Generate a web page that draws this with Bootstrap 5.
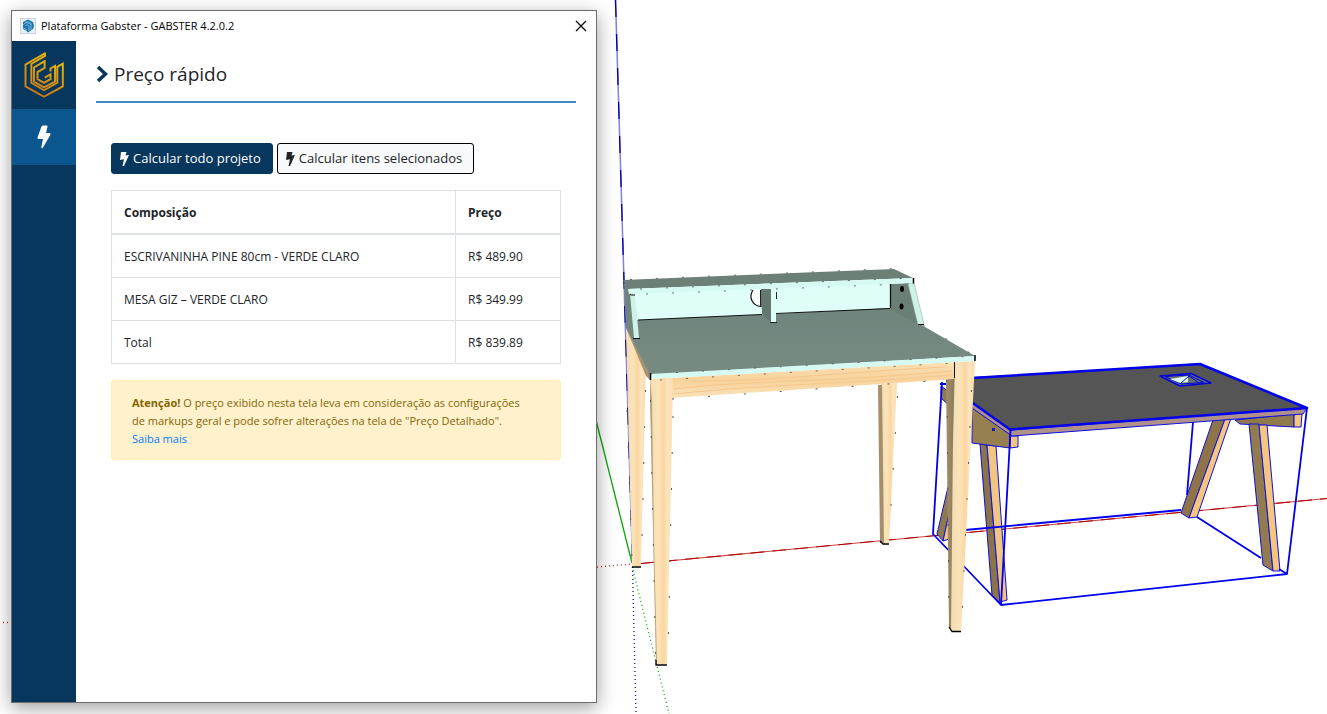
<!DOCTYPE html>
<html lang="pt-BR">
<head>
<meta charset="utf-8">
<meta name="viewport" content="width=device-width, initial-scale=1">
<title>Plataforma Gabster</title>
<link href="https://cdn.jsdelivr.net/npm/bootstrap@5.3.0/dist/css/bootstrap.min.css" rel="stylesheet">
<style>
  :root { --navy: #08375d; --navy-active: #0c568f; --rule: #3f8acb; }
  body { font-family: "Open Sans", "Noto Sans", sans-serif; font-size: 12px; line-height: 18px; color: #212529; }
  .workspace { padding: 10px 11px 11px; }
  .scene { inset: 0; width: 100%; height: 100%; }
  .plugin-window { width: 100%; max-width: 586px; border: 1px solid #6d6d6d; box-shadow: 0 5px 18px rgba(0,0,0,.38); }
  .title-bar { height: 30px; padding: 0 8px; gap: 5px; font-size: 11px; color: #000; }
  .close-btn { width: 14px; height: 14px; line-height: 0; }
  .side-nav { width: 64px; background: var(--navy); }
  .brand-link { height: 68px; }
  .side-link { height: 56px; background: var(--navy-active); }
  .page-body { padding: 20px; }
  .page-heading { font-size: 19px; line-height: 26px; font-weight: 500; padding-bottom: 14px; border-bottom: 2px solid var(--rule); gap: 6px; }
  .price-panel { padding: 40px 15px 0; }
  .btn-calc { font-size: 13px; line-height: 21px; padding: 4px 11px 4px 8px; border-radius: 3px; display: inline-flex; align-items: center; gap: 4px; white-space: nowrap; }
  .btn-all, .btn-all:hover { background: var(--navy); border-color: var(--navy); color: #fff; }
  .btn-picked, .btn-picked:hover { background: #f8f9fa; border-color: #000; color: #212529; }
  .price-table { margin: 16px 0; border-color: #dee2e6; color: #212529; }
  .price-table th, .price-table td { padding: 13px 12px 11px; }
  .price-table thead th { border-bottom-width: 2px; }
  .price-col { width: 105px; }
  .notice { background: #fff1cc; border-color: #ffeeba; color: #856404; font-size: 11px; padding: 13px 30px 11px 20px; border-radius: 3px; }
  .notice a { color: #007bff; }
</style>
</head>
<body>
<main class="workspace position-relative min-vh-100 d-flex overflow-hidden bg-white">
  <svg class="scene position-absolute" viewBox="0 0 1327 714" preserveAspectRatio="xMinYMin slice" aria-hidden="true">
    <defs>
      <linearGradient id="pine" x1="0" x2="1" y1="0" y2="0">
        <stop offset="0" stop-color="#f3dcb0"/><stop offset=".35" stop-color="#fbe3ba"/><stop offset=".6" stop-color="#fbd6a0"/><stop offset=".75" stop-color="#fbe5bf"/><stop offset="1" stop-color="#fbdcae"/>
      </linearGradient>
      <linearGradient id="pineRail" x1="0" x2="0" y1="0" y2="1">
        <stop offset="0" stop-color="#fae0b4"/><stop offset=".5" stop-color="#f8d29c"/><stop offset="1" stop-color="#fbe2b8"/>
      </linearGradient>
      <linearGradient id="shade" x1="0" x2="1" y1="0" y2="0">
        <stop offset="0" stop-color="#a48f68"/><stop offset="1" stop-color="#85765a"/>
      </linearGradient>
      <linearGradient id="greenTop" x1="0" x2="0" y1="0" y2="1">
        <stop offset="0" stop-color="#6d827a"/><stop offset="1" stop-color="#778b83"/>
      </linearGradient>
    </defs>

    <!-- drawing axes -->
    <g fill="none">
      <path d="M615.500 0L632.500 563" stroke="#8080e0" stroke-width="1.500"/>
      <path d="M615.500 0L632.500 563" stroke="#0000a0" stroke-width="1.300" stroke-dasharray="17 17"/>
      <path d="M596 420L632 563" stroke="#0aa60a" stroke-width="1.300"/>
      <path d="M641 563.500L1327 498.500" stroke="#c44" stroke-width="1.100"/>
      <path d="M641 563.500L1327 498.500" stroke="#b00000" stroke-width="1" stroke-dasharray="14 8"/>
      <path d="M3 622.500H11M597 567L632 564" stroke="#c22" stroke-width="1.300" stroke-dasharray="1 3"/>
      <path d="M632.500 567L636 714" stroke="#22b" stroke-width="1.400" stroke-dasharray="1 3"/>
      <path d="M633 570L669 714" stroke="#0a0" stroke-width="1.300" stroke-dasharray="1 3"/>
    </g>

    <!-- selected desk -->
    <g stroke-linejoin="round">
      <g stroke="#0f0fe0" stroke-width="1">
        <path fill="#8f7a4e" d="M937 534L952 470V500L943 541Z"/>
        <path fill="#f0c680" d="M943 541L952 500V538Z"/>
        <path fill="#8f7a4e" d="M941 386L952 394V408L941 398Z"/>
        <path fill="#8f7448" d="M1213 420L1225 419L1189 518L1181 513Z"/>
        <path fill="#f4c67e" d="M1225 419L1231 418L1197 517L1189 518Z"/>
        <path fill="#90794a" d="M1235 420L1294 414V427L1240 424Z"/>
        <path fill="#f4c67e" d="M1294 415L1302 413L1301 427H1294Z"/>
        <path fill="#927b4e" d="M1249 424H1259L1273 571L1263 565Z"/>
        <path fill="#f4c67e" d="M1259 425H1267L1280 571H1273Z"/>
        <path fill="#8b7448" d="M980 444L987 445L1000 603L992 595Z"/>
        <path fill="#f0c680" d="M987 445L996 446L1007 600L1000 602Z"/>
        <path fill="#96804f" d="M972 407L1010 434V448L972 443Z"/>
        <path fill="#f0c680" d="M1010 436H1018V447L1010 448Z"/>
        <path fill="#b0918a" d="M1010 430L1307 408L1303 414L1012 436L972 408V402Z"/>
      </g>
      <path fill="#555" d="M972 377L1200 364L1307 408L1010 429L972 403Z"/>
      <g fill="none" stroke="#00e">
        <path stroke-width="2.500" d="M972 378L1200 364L1307 408L1010 429.500L972 402.500"/>
        <path stroke-width="1.800" d="M942 382L933 534L1001 605L1287 574L1307 408M1010.500 430L1001 605M965 530L1181 510M1197 517L1261 558M1279 569L1287 574M1193 422L1187 495M940 384L950 384"/>
      </g>
      <path fill="#68716f" stroke="#0000dc" stroke-width="1.400" d="M1160 376L1191 373.500L1211 383L1180 386Z"/>
      <path fill="none" stroke="#0000dc" d="M1165 376.500L1189 375L1204 382.500L1181 384Z"/>
      <path fill="#dffcfa" d="M1170 379L1188 376V382L1180 383Z"/>
      <path fill="none" stroke="#0000dc" d="M1181 383L1189 376L1199 383"/>
      <rect x="992" y="428" width="3" height="3" fill="#1818c8"/>
    </g>

    <!-- pine desk: legs and rails -->
    <path fill="url(#pine)" d="M626 328L646 360L645 400L641 566H632Z"/>
    <path fill="#a89270" d="M626 328L650 374V380L646 376Z"/>
    <path fill="url(#pine)" d="M881 384L897 383L889 543H882Z"/>
    <path fill="#a58f6b" d="M878 385H882L884 543H880Z"/>
    <path fill="url(#shade)" d="M946 380L956 362L954 440L952 630L949 627Z"/>
    <path fill="url(#pine)" d="M955 362L975 361L971 440L961 631H951L953 440Z"/>
    <path fill="url(#pineRail)" d="M650 379L954 362V379L672 398Z"/>
    <path fill="none" stroke="#f5c78c" d="M674 389C750 380 820 383 952 371M674 394C770 384 850 384 952 375M690 381C760 382 830 373 945 367"/>
    <path fill="none" stroke="#111" d="M954.500 362V378"/>
    <path fill="url(#pine)" d="M650 379L673 378L672 430L667 664H656L651 430Z"/>
    <path fill="#b9a27b" d="M650 378L652 400L654 540L657 664H656L650 400Z"/>
    <g fill="none" stroke="#000" stroke-width="1.300">
      <path d="M656 660V665H667M632 567H641M949 627L952 631.500H961M880 541L883 544H889"/>
      <path stroke="#555" stroke-width="1" stroke-dasharray="2 34" d="M645.500 390L641.500 562M650.500 400L655.500 655M673 416L668 655M897.500 396L889 540M971.500 390L962 620M947 380L949 620M627 410L632 560M672 399L945 380"/>
    </g>

    <!-- pine desk: painted top, hutch and shelf -->
    <path fill="url(#greenTop)" d="M624 283L632 290L638 320L890 307L920 324L975 356L650 375L626 328Z"/>
    <path fill="#dffef8" d="M634 293L891 282V308L776 314L637 320Z"/>
    <path fill="none" stroke="#111" stroke-width="1.200" d="M638 320L762 314.500M776 313.500L890 308.500"/>
    <path fill="#fff" stroke="#111" stroke-width="1.200" d="M753 290C748 298 753 306 761 306.500V290"/>
    <path fill="#64786f" d="M761 289H771V322L762 314Z"/>
    <path fill="#dffef8" d="M771 288H776V322H771Z"/>
    <path fill="none" stroke="#222" d="M760.500 290V306M770 322.500H777M776.500 292V299"/>
    <path fill="#6b7f77" d="M890 284L909 283L919 325L890 309Z"/>
    <path fill="none" stroke="#111" stroke-width="1.300" d="M890.500 284V308"/>
    <ellipse cx="902" cy="289" rx="2" ry="3"/><ellipse cx="901.500" cy="306.500" rx="2" ry="3"/>
    <path fill="#cef1e8" stroke="#8ba49c" stroke-width=".5" d="M908 284L914 283L924 324L918 325Z"/>
    <path fill="#cef1e8" d="M630 294L635 294L639 338H634Z"/>
    <path fill="none" stroke="#111" d="M633 338.500H640M918 324.500H924M630.500 290V295H635"/>
    <path fill="#6d8078" d="M623 280L894 269L913 278L628 289Z"/>
    <path fill="#d6faf2" d="M628 289L913 278V283L629 294Z"/>
    <path fill="#d6faf2" d="M650 374L975 356V361L650 379Z"/>
    <path fill="none" stroke="#000" stroke-width="1.500" d="M913.500 278V283.500M975 355V361M650.500 373V380"/>
    <path fill="none" stroke="#3b4542" stroke-opacity=".75" stroke-width="1" stroke-dasharray="2 24" d="M630 279.500L894 268.500L913 278M640 289L913 278M646 294L905 284M650 374L975 356M660 380L970 362M923 325L975 356"/>
  </svg>

  <section class="plugin-window position-relative d-flex flex-column bg-white" aria-label="Plataforma Gabster">
    <header class="title-bar d-flex align-items-center">
      <svg width="16" height="16" viewBox="0 0 16 16" class="flex-shrink-0" aria-hidden="true">
        <rect x=".5" y=".5" width="15" height="15" fill="#eaf1f8" stroke="#c9d3dd"/>
        <path fill="#1d75b0" d="M3 4l5-2.500 5 2.500 1 4-1 3-5 3.500-2-2-3-1.500z"/>
        <path fill="none" stroke="#8cc4e6" stroke-width=".8" d="M3 7c2-3 6-3 8 0v5M5 8c2-2 4-1 4 1v4M2.500 9.500L7 12M5 4.500c3-1 5 0 7 2"/>
      </svg>
      <span>Plataforma Gabster - GABSTER 4.2.0.2</span>
      <button type="button" class="close-btn btn p-0 border-0 ms-auto" aria-label="Fechar">
        <svg width="12" height="12" viewBox="0 0 12 12"><path d="M1 1l10 10M11 1L1 11" stroke="#000" stroke-width="1.200"/></svg>
      </button>
    </header>

    <div class="d-flex flex-grow-1">
      <nav class="side-nav flex-shrink-0" aria-label="Principal">
        <a href="#" class="brand-link d-flex align-items-center justify-content-center" aria-label="Gabster">
          <svg width="44" height="48" viewBox="66 152 132 148">
            <defs><linearGradient id="gold" x1=".7" y1="0" x2=".3" y2="1"><stop offset="0" stop-color="#e9bd0c"/><stop offset="1" stop-color="#cf7612"/></linearGradient></defs>
            <path fill="none" stroke="url(#gold)" stroke-width="6" d="M135 157V167L93 192V250L132 273L173 250V201L190 191V261L132 293L75 261V194L135 159M134 180V204L112 217V239L132 250L152 239V224L134 234M152 215V206L166 198V246L132 264L101 246V203L134 183"/>
          </svg>
        </a>
        <a href="#" class="side-link d-flex align-items-center justify-content-center" aria-label="Preço rápido" aria-current="page">
          <svg width="14" height="24" viewBox="0 0 14 24"><path fill="#fff" d="M4.500 1.500Q5 .5 6 .5H9.500Q10.800.5 10.500 1.800L9 8H12.500Q14 8.500 13.300 10L6 22.500Q5.500 23.500 4.600 23L4.300 22L6 14H1.500Q.3 13.800.5 12.500Z"/></svg>
        </a>
      </nav>

      <div class="page-body flex-grow-1">
        <h1 class="page-heading d-flex align-items-center mb-0">
          <svg width="12" height="18" viewBox="0 0 12 18" aria-hidden="true"><path d="M2 2l7.500 7L2 16" fill="none" stroke="#08375d" stroke-width="3.500"/></svg>
          Preço rápido
        </h1>
        <div class="price-panel">
          <div class="d-flex flex-wrap gap-1">
            <button type="button" class="btn btn-sm btn-calc btn-all">
              <svg width="9" height="14" viewBox="0 0 9 14" aria-hidden="true"><path fill="currentColor" d="M1 0H6.500L5.500 3.500L9 3L4 14H2.500L4 7.200L0 8Z"/></svg>
              Calcular todo projeto
            </button>
            <button type="button" class="btn btn-sm btn-calc btn-picked">
              <svg width="9" height="14" viewBox="0 0 9 14" aria-hidden="true"><path fill="currentColor" d="M1 0H6.500L5.500 3.500L9 3L4 14H2.500L4 7.200L0 8Z"/></svg>
              Calcular itens selecionados
            </button>
          </div>
          <table class="table table-bordered price-table">
            <thead><tr><th scope="col">Composição</th><th scope="col" class="price-col">Preço</th></tr></thead>
            <tbody>
              <tr><td>ESCRIVANINHA PINE 80cm - VERDE CLARO</td><td>R$ 489.90</td></tr>
              <tr><td>MESA GIZ – VERDE CLARO</td><td>R$ 349.99</td></tr>
              <tr><td>Total</td><td>R$ 839.89</td></tr>
            </tbody>
          </table>
          <div class="alert notice mb-0" role="alert">
            <strong>Atenção!</strong> O preço exibido nesta tela leva em consideração as configurações de markups geral e pode sofrer alterações na tela de "Preço Detalhado". <a href="#" class="text-decoration-none d-block">Saiba mais</a>
          </div>
        </div>
      </div>
    </div>
  </section>
</main>
<script src="https://cdn.jsdelivr.net/npm/bootstrap@5.3.0/dist/js/bootstrap.bundle.min.js"></script>
</body>
</html>
